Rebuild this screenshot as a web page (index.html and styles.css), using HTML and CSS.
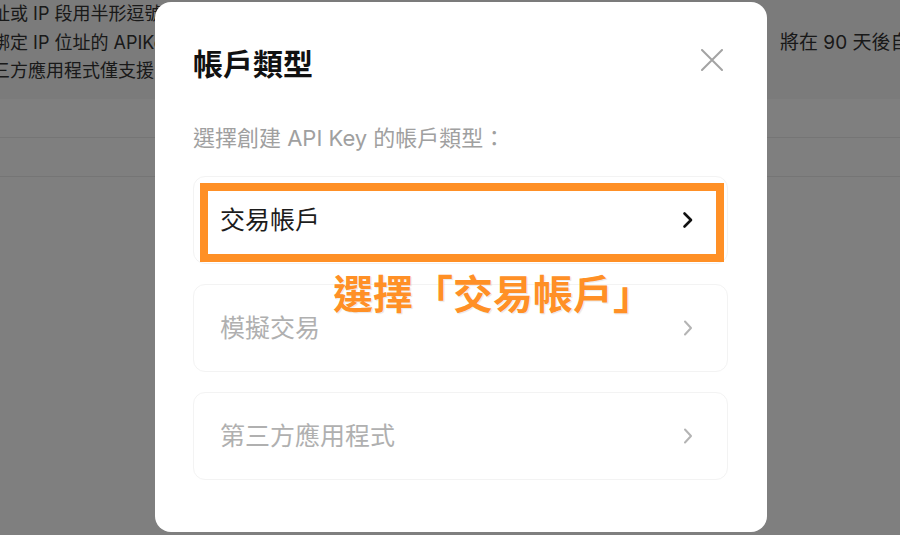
FILE: index.html
```html
<!DOCTYPE html>
<html lang="zh-Hant">
<head>
<meta charset="utf-8">
<title>帳戶類型</title>
<link rel="stylesheet" href="styles.css">
</head>
<body>
<div class="page">
  <div class="notes">
    <div class="note">址或 IP 段用半形逗號</div>
    <div class="note note-split">
      <span class="note-left">綁定 IP 位址的 APIKey</span>
      <span class="note-dot"></span>
      <span class="note-right">將在 90 天後自動刪除</span>
    </div>
    <div class="note note-third">第三方應用程式僅支援</div>
  </div>
  <div class="band"></div>
  <div class="band"></div>
</div>

<div class="overlay"></div>

<div class="modal">
  <div class="modal-head">
    <h1 class="modal-title">帳戶類型</h1>
    <button class="close" aria-label="關閉">
      <svg width="22" height="22" viewBox="0 0 22 22"><path d="M1 1 L21 21 M21 1 L1 21" stroke="#a3a3a3" stroke-width="2" fill="none" stroke-linecap="round"/></svg>
    </button>
  </div>
  <p class="modal-sub">選擇創建 API Key 的帳戶類型：</p>
  <div class="options">
    <div class="option option-active">
      <span class="option-label">交易帳戶</span>
      <svg class="chev" width="12" height="18" viewBox="0 0 12 18"><polyline points="2.5,2.5 9,9 2.5,15.5" fill="none" stroke="#111" stroke-width="2.6" stroke-linecap="round" stroke-linejoin="round"/></svg>
      <span class="highlight"></span>
    </div>
    <div class="option option-muted">
      <span class="option-label">模擬交易</span>
      <svg class="chev" width="12" height="18" viewBox="0 0 12 18"><polyline points="3,2.5 9,9 3,15.5" fill="none" stroke="#b4b4b4" stroke-width="2" stroke-linecap="round" stroke-linejoin="round"/></svg>
    </div>
    <div class="option option-muted">
      <span class="option-label">第三方應用程式</span>
      <svg class="chev" width="12" height="18" viewBox="0 0 12 18"><polyline points="3,2.5 9,9 3,15.5" fill="none" stroke="#b4b4b4" stroke-width="2" stroke-linecap="round" stroke-linejoin="round"/></svg>
    </div>
  </div>
  <div class="annotation">選擇「交易帳戶」</div>
</div>
</body>
</html>
```

FILE: styles.css
```css
html, body {
  margin: 0;
  padding: 0;
  width: 900px;
  height: 535px;
  overflow: hidden;
  background: #ffffff;
  font-family: "Inter", "Noto Sans CJK TC", sans-serif;
}

.page {
  width: 900px;
  height: 535px;
  display: flex;
  flex-direction: column;
}

.notes {
  height: 99px;
  background: #f6f6f6;
  box-sizing: border-box;
  overflow: hidden;
}

.note {
  height: 28.5px;
  line-height: 28.5px;
  font-size: 18px;
  color: #333333;
  white-space: nowrap;
  margin-left: -8px;
}

.note-split {
  display: flex;
  align-items: center;
}

.note-left {
  flex: 0 0 774px;
  overflow: hidden;
}

.note-dot {
  width: 10px;
  height: 10px;
  border-radius: 50%;
  background: #3b7be0;
  margin-left: -8px;
  margin-right: 22px;
}

.note-right {
  font-size: 19px;
}

.note-third {
  text-indent: -18px;
}

.band {
  height: 38px;
  border-bottom: 1px solid #eaeaea;
}

.overlay {
  position: fixed;
  inset: 0;
  background: rgba(0, 0, 0, 0.5);
}

.modal {
  position: absolute;
  left: 155px;
  top: 2px;
  width: 612px;
  height: 530px;
  box-sizing: border-box;
  background: #ffffff;
  border-radius: 16px;
  padding: 42px 39px 0 38px;
}

.modal-head {
  display: flex;
  align-items: center;
  justify-content: space-between;
  height: 40px;
}

.modal-title {
  margin: 0;
  font-size: 30px;
  font-weight: 700;
  line-height: 40px;
  color: #111111;
}

.close {
  border: 0;
  background: transparent;
  padding: 0;
  margin-right: 5px;
  margin-bottom: 8px;
  width: 22px;
  height: 22px;
  display: flex;
}

.modal-sub {
  margin: 0;
  margin-top: 39px;
  font-size: 22px;
  line-height: 30px;
  color: #a0a0a0;
}

.options {
  margin-top: 23px;
  display: flex;
  flex-direction: column;
  gap: 20px;
}

.option {
  position: relative;
  height: 88px;
  box-sizing: border-box;
  border: 1px solid #f3f3f3;
  border-radius: 12px;
  display: flex;
  align-items: center;
  justify-content: space-between;
  padding: 0 33px 0 26px;
}

.option-label {
  font-size: 25px;
  line-height: 34px;
}

.option-active .option-label {
  color: #1c1c1c;
}

.option-muted .option-label {
  color: #b0b0b0;
}

.highlight {
  position: absolute;
  left: 6px;
  top: 6px;
  right: 3px;
  bottom: 1px;
  border: 8px solid #ff9026;
  pointer-events: none;
}

.annotation {
  position: absolute;
  left: 178px;
  top: 271px;
  font-size: 40px;
  font-weight: 700;
  line-height: 44px;
  color: #ff9026;
  white-space: nowrap;
  text-shadow: 0 0 2px #ffffff, 1px 1px 1px rgba(0, 0, 0, 0.12);
}
```
